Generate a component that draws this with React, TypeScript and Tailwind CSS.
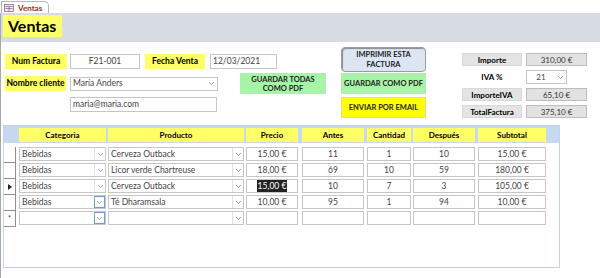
import React from "react";

const F = { fontFamily: "Lato, 'Liberation Sans', Arial, sans-serif" };

function Chevron({ className = "" }: { className?: string }) {
  return (
    <svg width="7" height="5" viewBox="0 0 7 5" className={className}>
      <path d="M1 1 L3.5 3.5 L6 1" fill="none" stroke="#9a9a9a" strokeWidth="0.9" />
    </svg>
  );
}

function Combo({ w, text, active = false, className = "" }: { w: string; text: string; active?: boolean; className?: string }) {
  return (
    <div className={`${w} ${className} shrink-0 h-[14px] flex items-stretch border border-[#c6c6c6] bg-white`}>
      <div className="flex-1 pl-[2px] text-[8.5px] leading-[12px] text-[#444] truncate">{text}</div>
      <div
        className={`w-[11px] flex items-center justify-center ${
          active ? "border border-[#6d9fd4]" : "border-l border-[#e2e2e2]"
        }`}
      >
        <Chevron />
      </div>
    </div>
  );
}

function Cell({ w, text, selected = false, className = "" }: { w: string; text: string; selected?: boolean; className?: string }) {
  return (
    <div className={`${w} ${className} shrink-0 h-[14px] border border-[#c6c6c6] bg-white flex items-center justify-center text-[8.5px] leading-[12px] text-[#444]`}>
      {selected ? <span className="bg-[#222] text-white px-[1px]">{text}</span> : text}
    </div>
  );
}

type Row = { cat: string; prod: string; precio: string; antes: string; cant: string; desp: string; sub: string };

const rows: Row[] = [
  { cat: "Bebidas", prod: "Cerveza Outback", precio: "15,00 €", antes: "11", cant: "1", desp: "10", sub: "15,00 €" },
  { cat: "Bebidas", prod: "Licor verde Chartreuse", precio: "18,00 €", antes: "69", cant: "10", desp: "59", sub: "180,00 €" },
  { cat: "Bebidas", prod: "Cerveza Outback", precio: "15,00 €", antes: "10", cant: "7", desp: "3", sub: "105,00 €" },
  { cat: "Bebidas", prod: "Té Dharamsala", precio: "10,00 €", antes: "95", cant: "1", desp: "94", sub: "10,00 €" },
  { cat: "", prod: "", precio: "", antes: "", cant: "", desp: "", sub: "" },
];

function Label({ w, children, className = "" }: { w: string; children: React.ReactNode; className?: string }) {
  return (
    <div className={`${w} ${className} shrink-0 h-[15px] bg-[#ffff66] flex items-center justify-center text-[8.5px] font-bold text-black whitespace-nowrap`}>
      {children}
    </div>
  );
}

function Box({ w, children, align = "center", className = "" }: { w: string; children: React.ReactNode; align?: "center" | "left"; className?: string }) {
  return (
    <div
      className={`${w} ${className} shrink-0 h-[15px] bg-white border border-[#c6c6c6] flex items-center ${
        align === "center" ? "justify-center" : "justify-start pl-[2px]"
      } text-[8.5px] text-[#444] whitespace-nowrap`}
    >
      {children}
    </div>
  );
}

function GrayLabel({ children }: { children: React.ReactNode }) {
  return (
    <div className="w-[60px] h-[13px] bg-[#e4e4e4] border border-[#d8d8d8] flex items-center justify-center text-[8px] font-bold text-black">
      {children}
    </div>
  );
}
function GrayVal({ children }: { children: React.ReactNode }) {
  return (
    <div className="w-[61px] h-[13px] bg-[#e2e2e2] border border-[#bdbdbd] flex items-center justify-center text-[8px] text-[#333]">
      {children}
    </div>
  );
}

function HeadCell({ w, children, className = "" }: { w: string; children: React.ReactNode; className?: string }) {
  return (
    <div className={`${w} ${className} shrink-0 h-[14px] bg-[#ffff66] flex items-center justify-center text-[8px] font-bold`}>
      {children}
    </div>
  );
}

export default function App() {
  return (
    <div className="w-[600px] h-[278px] bg-white overflow-hidden" style={F}>
      {/* tab bar */}
      <div className="h-[13px] flex items-end bg-white">
        <div className="h-[12px] w-[48px] ml-[1px] border-t border-l border-r border-[#b8b8b8] rounded-tr-[5px] bg-white flex items-center gap-[4px] pl-[2px]">
          <svg width="10" height="8" viewBox="0 0 10 8">
            <rect x="0.5" y="0.5" width="9" height="7" fill="#f3e6ee" stroke="#a06080" strokeWidth="0.8" />
            <line x1="1.5" y1="2.5" x2="8.5" y2="2.5" stroke="#7a7aa8" strokeWidth="0.8" />
            <line x1="1.5" y1="4.5" x2="8.5" y2="4.5" stroke="#7a7aa8" strokeWidth="0.8" />
            <line x1="5" y1="2" x2="5" y2="7" stroke="#7a7aa8" strokeWidth="0.8" />
          </svg>
          <span className="text-[8px] font-bold text-[#a4262c] leading-none">Ventas</span>
        </div>
      </div>
      {/* header */}
      <div className="h-[29px] bg-[#d6dbe4] border-l border-[#a8a8a8] pl-[2px] pt-[2px]">
        <div className="w-[59px] h-[22px] bg-[#ffff66] flex items-center pl-[5px] text-[16px] font-bold text-black leading-none">
          Ventas
        </div>
      </div>
      {/* detail */}
      <div className="h-[236px] border-l border-[#a8a8a8] flex flex-col">
        <div className="h-[83px] flex items-start pl-[4px]">
          {/* left block */}
          <div className="w-[321px] shrink-0 mt-[12px] flex flex-col">
            <div className="flex items-center">
              <Label w="w-[62px]">Num Factura</Label>
              <Box w="w-[70px]" className="ml-[3px]">F21-001</Box>
              <Label w="w-[60px]" className="ml-[5px]">Fecha Venta</Label>
              <Box w="w-[67px]" className="ml-[5px]" align="left">12/03/2021</Box>
            </div>
            <div className="flex items-start mt-[4px]">
              <div className="flex flex-col mt-[3px] shrink-0">
                <div className="flex items-center">
                  <Label w="w-[61px]">Nombre cliente</Label>
                  <div className="ml-[4px] w-[148px] h-[14px] bg-white border border-[#c6c6c6] flex items-center">
                    <span className="flex-1 pl-[2px] text-[8.5px] text-[#444]">María Anders</span>
                    <div className="w-[11px] flex justify-center"><Chevron /></div>
                  </div>
                </div>
                <div className="flex mt-[6px] ml-[65px]">
                  <Box w="w-[147px]" align="left">maria@maria.com</Box>
                </div>
              </div>
              <div className="ml-[22px] shrink-0 w-[86px] h-[21px] bg-[#a6f5a6] border border-[#b8e8b8] flex items-center justify-center text-center text-[7.5px] font-bold leading-[9px] text-[#222]">
                GUARDAR TODAS
                <br />
                COMO PDF
              </div>
            </div>
          </div>
          {/* buttons */}
          <div className="ml-[15px] mt-[5px] flex flex-col w-[85px] shrink-0">
            <div className="h-[25px] bg-[#dce6f3] border border-[#9a9a9a] rounded-[4px] shadow-[inset_1px_1px_1px_#8a8a8a] flex items-center justify-center text-center text-[7.5px] font-bold leading-[10px] text-[#222]">
              IMPRIMIR ESTA
              <br />
              FACTURA
            </div>
            <div className="mt-[1px] h-[21px] bg-[#a6f5a6] border border-[#b8e8b8] flex items-center justify-center text-[7.5px] font-bold text-[#222]">
              GUARDAR COMO PDF
            </div>
            <div className="mt-[3px] h-[21px] bg-[#ffff00] border border-[#e0e080] flex items-center justify-center text-[7.5px] font-bold text-[#222]">
              ENVIAR POR EMAIL
            </div>
          </div>
          {/* totals */}
          <div className="ml-[36px] mt-[11px] flex flex-col gap-[4px] shrink-0">
            <div className="flex gap-[4px]">
              <GrayLabel>Importe</GrayLabel>
              <GrayVal>310,00 €</GrayVal>
            </div>
            <div className="flex gap-[4px] items-center">
              <div className="w-[60px] h-[13px] flex items-center justify-center text-[8px] font-bold text-black">IVA %</div>
              <div className="w-[41px] h-[14px] bg-white border border-[#c6c6c6] flex items-center">
                <span className="flex-1 text-center text-[8px] text-[#444]">21</span>
                <div className="w-[11px] flex justify-center"><Chevron /></div>
              </div>
            </div>
            <div className="flex gap-[4px]">
              <GrayLabel>ImporteIVA</GrayLabel>
              <GrayVal>65,10 €</GrayVal>
            </div>
            <div className="flex gap-[4px]">
              <GrayLabel>TotalFactura</GrayLabel>
              <GrayVal>375,10 €</GrayVal>
            </div>
          </div>
        </div>
        {/* subform */}
        <div className="ml-[2px] w-[557px] h-[143px] border border-[#c4d3ea] bg-white flex flex-col">
          <div className="h-[17px] bg-[#c5d9f1] flex items-end pb-[1px]">
            <div className="w-[15px] shrink-0" />
            <HeadCell w="w-[87px]">Categoria</HeadCell>
            <HeadCell w="w-[136px]" className="ml-[2px]">Producto</HeadCell>
            <HeadCell w="w-[52px]" className="ml-[2px]">Precio</HeadCell>
            <HeadCell w="w-[62px]" className="ml-[4px]">Antes</HeadCell>
            <HeadCell w="w-[44px]" className="ml-[3px]">Cantidad</HeadCell>
            <HeadCell w="w-[62px]" className="ml-[2px]">Después</HeadCell>
            <HeadCell w="w-[68px]" className="ml-[3px]">Subtotal</HeadCell>
          </div>
          <div className="flex flex-col mt-[4px]">
            {rows.map((r, i) => (
              <div key={i} className="h-[16px] flex items-start">
                <div className="w-[12px] shrink-0 h-[16px] border-r border-b border-[#8f8f8f] flex items-center justify-center text-[7px] text-[#333]">
                  {i === 2 ? (
                    <svg width="4" height="6" viewBox="0 0 4 6">
                      <path d="M0 0 L4 3 L0 6 Z" fill="#222" />
                    </svg>
                  ) : i === 4 ? (
                    "*"
                  ) : null}
                </div>
                <Combo w="w-[87px]" className="ml-[3px]" text={r.cat} active={i >= 3} />
                <Combo w="w-[136px]" className="ml-[2px]" text={r.prod} />
                <Cell w="w-[52px]" className="ml-[2px]" text={r.precio} selected={i === 2} />
                <Cell w="w-[62px]" className="ml-[4px]" text={r.antes} />
                <Cell w="w-[44px]" className="ml-[3px]" text={r.cant} />
                <Cell w="w-[62px]" className="ml-[2px]" text={r.desp} />
                <Cell w="w-[68px]" className="ml-[3px]" text={r.sub} />
              </div>
            ))}
          </div>
        </div>
      </div>
    </div>
  );
}
